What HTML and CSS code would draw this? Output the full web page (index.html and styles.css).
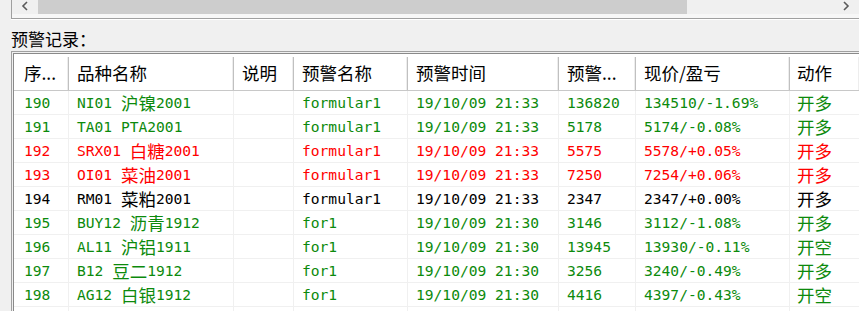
FILE: index.html
```html
<!DOCTYPE html>
<html lang="zh-CN">
<head>
<meta charset="utf-8">
<title>预警记录</title>
<link rel="stylesheet" href="styles.css">
</head>
<body>
<div class="hscroll">
  <div class="sb">
    <div class="sb-btn"><svg width="8" height="10" viewBox="0 0 8 10"><path d="M6 1 L2 5 L6 9" fill="none" stroke="#5a5a5a" stroke-width="1.6"/></svg></div>
    <div class="sb-track"><div class="sb-thumb"></div></div>
    <div class="sb-btn"><svg width="8" height="10" viewBox="0 0 8 10"><path d="M2 1 L6 5 L2 9" fill="none" stroke="#5a5a5a" stroke-width="1.6"/></svg></div>
  </div>
</div>
<div class="label">预警记录：</div>
<div class="frame">
  <div class="inner">
    <div class="list">
      <div class="row head">
        <div class="c c1">序...</div>
        <div class="c c2">品种名称</div>
        <div class="c c3">说明</div>
        <div class="c c4">预警名称</div>
        <div class="c c5">预警时间</div>
        <div class="c c6">预警...</div>
        <div class="c c7">现价/盈亏</div>
        <div class="c c8">动作</div>
      </div>
      <div class="row g">
        <div class="c c1">190</div><div class="c c2">NI01 <span class="cj">沪镍</span>2001</div><div class="c c3"></div><div class="c c4">formular1</div><div class="c c5">19/10/09 21:33</div><div class="c c6">136820</div><div class="c c7">134510/-1.69%</div><div class="c c8 cj">开多</div>
      </div>
      <div class="row g">
        <div class="c c1">191</div><div class="c c2">TA01 PTA2001</div><div class="c c3"></div><div class="c c4">formular1</div><div class="c c5">19/10/09 21:33</div><div class="c c6">5178</div><div class="c c7">5174/-0.08%</div><div class="c c8 cj">开多</div>
      </div>
      <div class="row r">
        <div class="c c1">192</div><div class="c c2">SRX01 <span class="cj">白糖</span>2001</div><div class="c c3"></div><div class="c c4">formular1</div><div class="c c5">19/10/09 21:33</div><div class="c c6">5575</div><div class="c c7">5578/+0.05%</div><div class="c c8 cj">开多</div>
      </div>
      <div class="row r">
        <div class="c c1">193</div><div class="c c2">OI01 <span class="cj">菜油</span>2001</div><div class="c c3"></div><div class="c c4">formular1</div><div class="c c5">19/10/09 21:33</div><div class="c c6">7250</div><div class="c c7">7254/+0.06%</div><div class="c c8 cj">开多</div>
      </div>
      <div class="row k">
        <div class="c c1">194</div><div class="c c2">RM01 <span class="cj">菜粕</span>2001</div><div class="c c3"></div><div class="c c4">formular1</div><div class="c c5">19/10/09 21:33</div><div class="c c6">2347</div><div class="c c7">2347/+0.00%</div><div class="c c8 cj">开多</div>
      </div>
      <div class="row g">
        <div class="c c1">195</div><div class="c c2">BUY12 <span class="cj">沥青</span>1912</div><div class="c c3"></div><div class="c c4">for1</div><div class="c c5">19/10/09 21:30</div><div class="c c6">3146</div><div class="c c7">3112/-1.08%</div><div class="c c8 cj">开多</div>
      </div>
      <div class="row g">
        <div class="c c1">196</div><div class="c c2">AL11 <span class="cj">沪铝</span>1911</div><div class="c c3"></div><div class="c c4">for1</div><div class="c c5">19/10/09 21:30</div><div class="c c6">13945</div><div class="c c7">13930/-0.11%</div><div class="c c8 cj">开空</div>
      </div>
      <div class="row g">
        <div class="c c1">197</div><div class="c c2">B12 <span class="cj">豆二</span>1912</div><div class="c c3"></div><div class="c c4">for1</div><div class="c c5">19/10/09 21:30</div><div class="c c6">3256</div><div class="c c7">3240/-0.49%</div><div class="c c8 cj">开多</div>
      </div>
      <div class="row g">
        <div class="c c1">198</div><div class="c c2">AG12 <span class="cj">白银</span>1912</div><div class="c c3"></div><div class="c c4">for1</div><div class="c c5">19/10/09 21:30</div><div class="c c6">4416</div><div class="c c7">4397/-0.43%</div><div class="c c8 cj">开空</div>
      </div>
      <div class="row g">
        <div class="c c1"></div><div class="c c2"></div><div class="c c3"></div><div class="c c4"></div><div class="c c5"></div><div class="c c6"></div><div class="c c7"></div><div class="c c8"></div>
      </div>
    </div>
  </div>
</div>
</body>
</html>
```
FILE: styles.css
```css
html, body {
  margin: 0;
  padding: 0;
  overflow: hidden;
  background: #f0f0f0;
}
body {
  font-family: "Noto Sans CJK SC", "Noto Sans", sans-serif;
  width: 859px;
  height: 311px;
}
.hscroll {
  margin-left: 11px;
  width: 847px;
  height: 18px;
  border-left: 1px solid #a0a0a0;
  border-bottom: 1px solid #a0a0a0;
  box-shadow: 0 1px 0 #ffffff;
  background: #f7f7f7;
  overflow: hidden;
}
.sb {
  display: flex;
  height: 17px;
  margin-top: -3px;
  background: #f0f0f0;
}
.sb-btn {
  width: 26px;
  display: flex;
  align-items: center;
  justify-content: center;
}
.sb-track {
  flex: 1;
  display: flex;
  align-items: stretch;
}
.sb-thumb {
  width: 649px;
  background: #cdcdcd;
}
.label {
  margin-left: 11px;
  padding-top: 9px;
  height: 23px;
  line-height: 22px;
  font-size: 17px;
  color: #000;
}
.frame {
  margin-left: 11px;
  width: 847px;
  height: 259px;
  overflow: hidden;
  border-top: 1px solid #a0a0a0;
  border-left: 1px solid #a0a0a0;
  padding: 1px 0 0 1px;
  background: #f0f0f0;
}
.inner {
  height: 258px;
  overflow: hidden;
  border-top: 1px solid #8a8a8a;
  border-left: 1px solid #8a8a8a;
  background: #ffffff;
  padding-top: 3px;
  box-sizing: border-box;
}
.list {
  display: flex;
  flex-direction: column;
}
.row {
  display: flex;
  flex: none;
  height: 24px;
  border-bottom: 1px solid #f0f0f0;
  box-sizing: border-box;
  font-family: "DejaVu Sans Mono", "Noto Sans CJK SC", monospace;
  font-size: 14.6px;
  line-height: 23px;
  white-space: nowrap;
}
.row .c {
  box-sizing: border-box;
  display: block;
  padding-left: 8px;
  border-right: 1px solid #f0f0f0;
  overflow: hidden;
}
.row.head {
  height: 34px;
  line-height: 31px;
  border-bottom: 1px solid #c8c8c8;
  font-family: "Noto Sans CJK SC", sans-serif;
  font-size: 17.5px;
  color: #000;
}
.row.head .c {
  border-right: 1px solid #c0c0c0;
  box-shadow: inset -1px 0 0 #ededed;
}
.c1 { width: 55px; padding-left: 10px !important; }
.c2 { width: 165px; }
.c3 { width: 60px; }
.c4 { width: 114px; }
.c5 { width: 151px; }
.c6 { width: 77px; }
.c7 { width: 154px; }
.c8 { flex: 1; padding-left: 7px !important; }
.cj {
  font-family: "Noto Sans CJK SC", sans-serif;
  font-size: 17.5px;
  vertical-align: top;
}
.g { color: #0c8a0c; }
.r { color: #ff0000; }
.k { color: #000000; }
```
